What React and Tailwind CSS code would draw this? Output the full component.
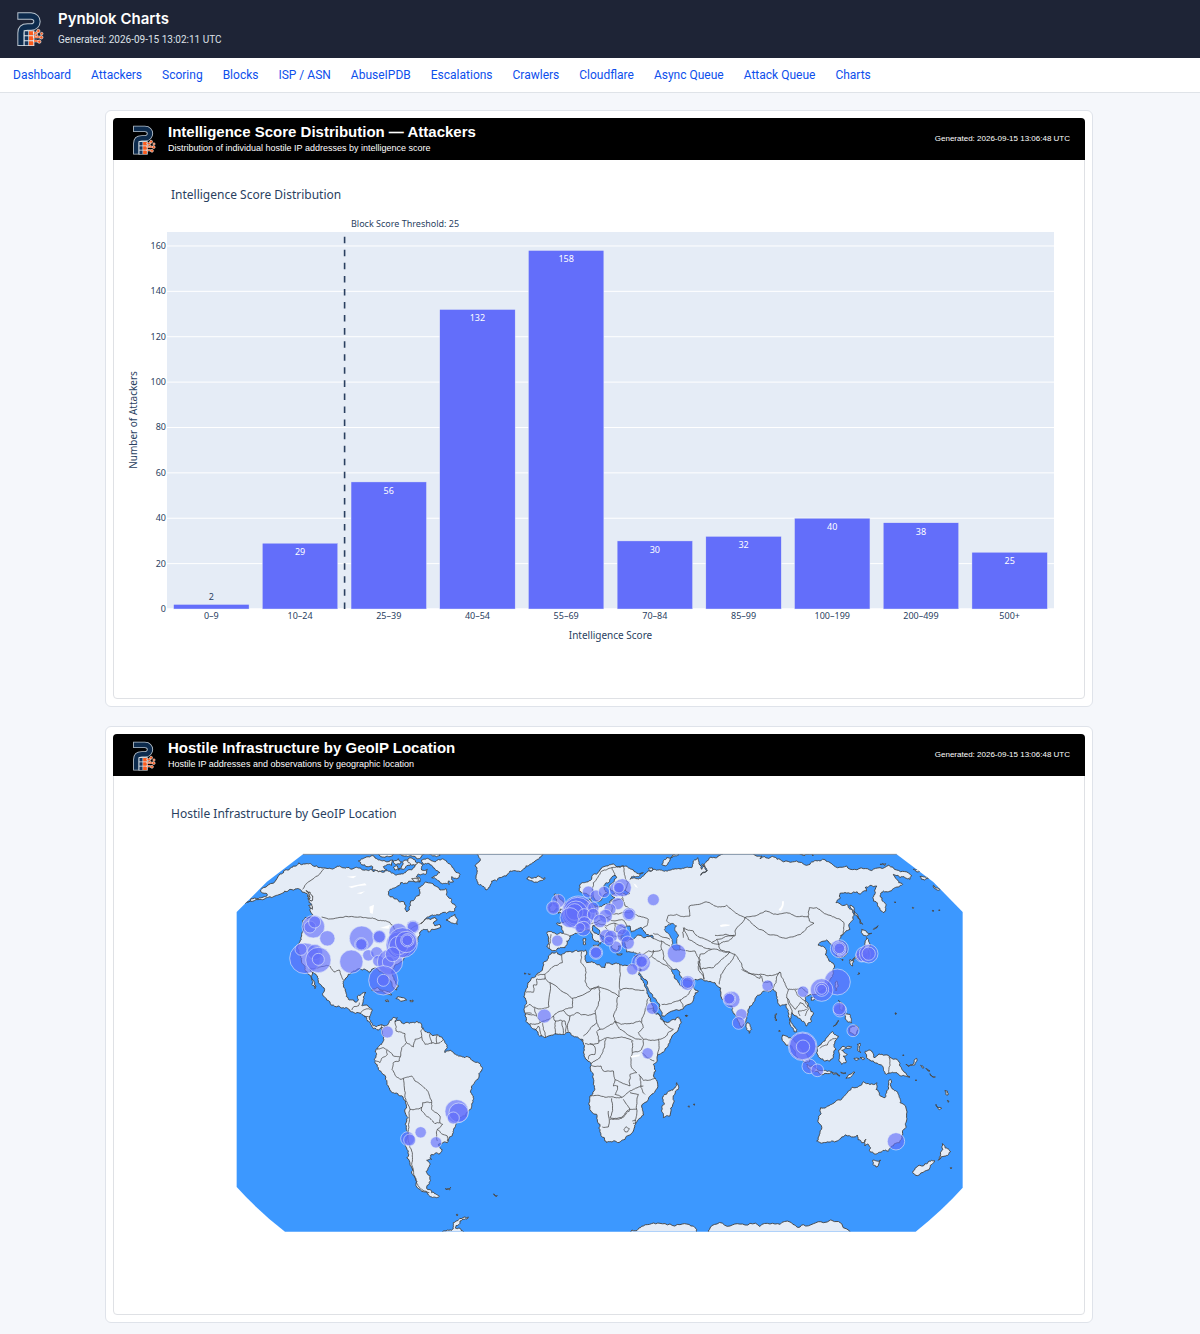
import React from "react";

const NAV_ITEMS = [
  "Dashboard",
  "Attackers",
  "Scoring",
  "Blocks",
  "ISP / ASN",
  "AbuseIPDB",
  "Escalations",
  "Crawlers",
  "Cloudflare",
  "Async Queue",
  "Attack Queue",
  "Charts",
];

const SCORES = [
  ["0–9", 2],
  ["10–24", 29],
  ["25–39", 56],
  ["40–54", 132],
  ["55–69", 158],
  ["70–84", 30],
  ["85–99", 32],
  ["100–199", 40],
  ["200–499", 38],
  ["500+", 25],
];

/* Map geometry: each region keeps its own origin; coordinates are relative to it. */
const REGIONS = [
  {
    at: [0, 0],
    land: [
      "150,84 165,72 190,60 225,54 250,60 285,66 310,68 335,64 350,64 362,69 390,66 410,72 430,78 450,76 470,74 490,82 510,84 530,76 545,72 555,60 570,50 578,58 575,72 592,70 585,86 565,84 558,92 570,98 570,108 545,106 530,112 512,110 500,122 480,130 475,145 480,152 502,160 522,168 528,178 525,190 530,198 538,192 542,178 542,165 555,158 568,148 570,138 566,125 578,118 586,108 605,112 620,122 630,132 648,128 652,150 665,170 678,182 674,195 650,202 620,206 600,210 585,220 573,232 590,218 615,214 622,222 610,232 615,240 630,236 632,244 615,250 595,258 592,250 580,250 570,258 565,272 560,290 540,300 545,312 530,325 520,340 500,355 490,368 485,378 492,395 505,420 500,432 490,425 478,400 468,385 450,378 440,368 425,370 420,378 400,370 380,372 355,385 345,400 340,420 348,440 355,460 375,468 385,460 385,448 400,440 408,440 402,458 395,478 415,482 425,490 420,510 425,530 440,542 455,536 470,545 470,552 455,545 445,552 430,548 412,525 400,508 385,500 370,498 350,485 325,480 290,462 280,450 283,435 265,405 250,380 240,368 245,395 258,420 255,428 245,415 235,385 225,365 215,345 205,320 208,290 215,270 218,235 225,215 240,215 248,205 240,190 245,175 235,160 225,140 205,128 180,130 150,145 120,152 90,160 45,172 85,158 112,146 92,136 100,125",
      "425,432 445,426 470,436 485,447 470,445 445,436",
      "498,458 505,452 520,455 530,462 512,466",
      "466,463 474,462 476,467 468,467",
      "540,463 549,462 549,467 541,467",
      "228,134 240,138 248,150 246,165 236,158",
      "236,178 244,176 247,190 240,186",
      "232,150 240,152 238,160",
      "1180,1170 1206,1152 1240,1140 1290,1132 1350,1136 1400,1150 1400,1170",
      "1425,1170 1440,1146 1500,1140 1560,1132 1620,1134 1680,1128 1720,1136 1780,1130 1860,1156 1860,1170",
    ],
    borders: [
      "218,130 240,105 282,68",
      "275,213 330,214 400,215 428,216 455,224 478,228 490,240 500,258 530,262 555,240 573,232",
      "240,366 262,366 290,358 300,360 312,378 328,372 340,402",
      "365,492 372,482 385,480 388,470",
      "390,502 400,492 424,490",
      "402,512 420,512",
      "455,546 454,536",
    ],
  },
  {
    at: [330, 0],
    land: [
      "55,45 75,35 110,38 135,45 158,42 155,58 130,62 140,70 115,78 95,70 98,62 65,56",
      "110,18 300,18 300,28 290,32 245,30 235,38 225,32 200,30 150,32 120,30",
      "160,45 175,38 185,48 170,55",
      "190,45 210,40 215,52 200,60 190,70 175,72 185,60",
      "205,38 225,42 232,52 215,58",
      "160,64 172,60 176,68 164,72",
      "245,42 265,38 285,48 300,42 320,45 335,60 345,75 360,85 350,98 335,92 340,108 325,105 328,115 305,112 290,100 275,95 290,88 300,80 285,70 275,58 250,55",
      "215,98 235,96 240,106 225,108",
      "318,222 330,215 345,205 348,215 353,220 352,235 340,232 330,228",
    ],
    borders: [],
  },
  {
    at: [510, 0],
    land: [
      "228,18 240,45 225,60 232,75 228,90 235,115 258,132 270,122 275,105 300,95 330,75 370,70 390,55 405,45 425,30 430,18",
      "380,98 385,92 400,96 415,90 435,95 428,103 408,108 392,104",
    ],
    borders: [],
  },
  {
    at: [390, 465],
    land: [
      "62,82 75,75 90,58 112,50 105,62 118,58 135,66 160,64 182,66 185,78 205,95 235,102 250,115 262,140 255,155 275,150 300,165 330,170 360,188 366,208 355,232 340,250 340,285 335,310 325,330 300,350 288,370 280,395 262,425 245,428 235,430 246,445 240,458 212,462 215,475 200,478 210,488 205,500 198,512 210,528 208,548 200,562 215,575 238,586 215,588 190,572 168,550 158,520 150,490 145,450 142,410 136,370 134,330 130,292 100,275 85,255 65,215 45,185 48,165 48,145 65,130 70,105",
      "240,705 258,690 275,688 280,665 300,652 325,648 300,660 285,680 310,692 320,705",
      "256,563 272,559 270,566 260,567",
      "400,579 412,584 408,587",
      "288,641 293,640 292,645",
    ],
    borders: [
      "105,62 108,90 135,98 140,125 125,140 122,165 118,180 100,185 96,205 105,222 120,235 130,232 155,225 165,240 195,262 210,290 215,305",
      "50,145 70,140 80,148 82,160 65,172 60,185 48,180",
      "80,145 100,165 120,168",
      "140,125 160,138 165,115 185,108 182,90 190,80",
      "185,108 195,130 215,126 240,125 250,115",
      "210,98 215,128",
      "232,102 230,126",
      "130,232 135,290 150,325 185,320 188,305 215,305 215,325 240,345 240,365 225,368 205,348 185,330 185,318",
      "240,365 248,370 232,385 230,400 232,420",
      "232,385 262,405 262,420",
      "150,325 148,360 145,400 155,450 155,490 165,530 180,560 208,575",
    ],
  },
  {
    at: [855, 345],
    land: [
      "110,-25 135,-18 155,-28 185,-32 212,-33 215,-20 210,-5 215,5 245,10 270,20 275,5 300,8 320,12 345,10 372,13 376,24 370,40 378,55 395,85 405,110 415,140 435,165 445,182 490,168 497,175 490,205 460,250 430,280 415,310 418,350 424,385 400,415 380,435 386,462 368,478 355,510 330,535 300,540 275,545 268,530 255,490 245,460 225,405 235,370 235,340 228,310 208,280 205,245 202,235 190,230 185,228 165,215 130,220 90,230 65,210 45,190 30,165 28,150 35,125 32,90 45,60 65,40 80,30 85,5 100,-15",
      "485,365 490,385 478,420 465,465 445,470 440,450 448,430 445,405 465,390",
      "200,238 204,236 203,241",
      "519,436 523,435 522,439",
      "535,430 539,429 538,433",
      "512,164 518,164 516,167",
      "28,36 33,37 30,40",
      "40,38 46,39 43,42",
    ],
    borders: [
      "140,-18 142,5 110,20 90,40 65,42",
      "32,94 55,94 55,72 65,72 65,54 90,54 90,40",
      "90,50 105,65 102,138 65,142 45,130 32,138",
      "105,65 170,112 195,105 252,75",
      "200,-28 198,5 212,25 210,60 225,85 252,78",
      "315,12 316,88 388,88",
      "252,78 312,108 312,88",
      "308,108 306,140 295,165 305,185 300,182",
      "252,80 250,130 240,150 245,185 225,205 205,225",
      "165,165 185,155 215,162 240,158",
      "172,112 172,140 145,148 165,165 160,212",
      "145,148 115,165 120,180 150,180",
      "60,140 65,165 75,185 88,180 115,165",
      "30,160 62,164",
      "30,156 50,157",
      "45,188 60,190 75,185",
      "85,182 85,205 92,228",
      "60,208 70,195 75,210 80,225",
      "122,180 122,220",
      "142,180 146,218",
      "150,180 153,216",
      "245,185 255,205 280,195 300,180 315,205 345,225 380,235",
      "255,205 245,212 252,240 250,247 210,248",
      "250,240 275,230 290,232 320,228 345,235 355,240",
      "273,232 265,265 255,290 240,300 228,308",
      "225,248 240,258 240,280 222,284 220,295",
      "305,185 320,190 345,188 375,180 385,200 370,215 385,235",
      "400,112 395,130 390,150 380,185",
      "395,145 415,140 428,158 442,175 450,190 475,205 450,228 430,235 405,238 385,235",
      "430,235 428,285",
      "385,235 380,265 352,275 350,240",
      "380,275 418,300",
      "352,275 348,300 350,320 365,335 345,340 345,375 325,368 310,360 300,355 295,330 265,330 258,315 230,313",
      "422,352 400,358 385,358 372,340",
      "300,355 295,375 308,375 300,400 320,410 355,385 385,375",
      "375,345 378,380 390,400",
      "228,405 260,406 300,410 320,408",
      "290,412 285,470 318,470 345,445 325,415",
      "345,445 365,445 370,400 345,395",
      "365,445 362,480",
      "262,498 280,498 280,450",
      "285,475 320,472 345,448",
      "327,505 333,497 343,503 337,513 330,512 327,505",
      "352,480 360,477 362,486 354,487",
    ],
  },
  {
    at: [855, 0],
    land: [
      "95,262 115,260 145,262 140,240 125,232 150,225 165,222 165,210 185,205 200,195 210,185 215,165 225,160 235,150 230,168 240,180 262,180 285,175 290,160 300,155 290,148 320,143 345,142 330,132 300,140 285,130 285,115 305,95 300,88 285,100 270,115 268,130 278,140 265,150 255,165 245,165 235,145 222,148 200,140 193,120 215,108 235,85 260,65 290,55 325,60 350,70 385,80 370,92 350,92 345,100 365,98 385,90 410,75 430,72 455,75 480,68 510,65 530,65 535,45 548,35 560,70 567,55 575,75 562,80 557,88 577,72 560,55 575,45 605,35 625,22 715,22 740,30 735,38 765,35 795,40 845,45 885,55 915,45 945,50 995,60 1045,68 1095,65 1145,72 1190,90 1185,100 1155,95 1135,85 1145,100 1163,115 1135,128 1105,135 1095,150 1113,175 1107,200 1095,190 1075,165 1080,145 1085,120 1065,118 1050,125 1055,135 1015,138 975,142 963,170 995,175 1010,190 1015,220 1005,250 980,268 975,288 993,300 995,325 965,330 957,310 950,295 935,282 910,298 930,305 935,315 930,325 950,350 955,380 945,400 930,430 905,445 885,445 870,450 880,475 895,500 890,525 873,540 860,525 845,510 830,500 828,512 835,540 845,557 837,557 825,535 820,500 815,475 795,480 785,450 775,430 757,435 740,440 720,460 700,490 693,525 680,545 660,505 650,480 635,470 617,450 600,410 570,405 540,400 525,405 500,395 480,370 470,368 478,390 490,410 510,425 530,415 535,425 550,435 530,470 500,490 440,510 435,490 415,455 400,430 380,390 372,383 378,370 378,340 380,330 375,320 355,318 335,318 330,300 330,285 350,280 365,270 390,275 415,278 412,268 385,252 375,245 365,250 350,258 345,240 330,242 325,260 318,275 322,290 318,300 310,300 305,315 290,305 285,285 265,270 250,250 235,238 232,244 255,270 268,285 255,295 250,285 228,260 215,250 195,255 180,262 165,270 155,285 150,305 125,312 108,312 95,300 100,285",
      "235,298 252,296 248,305",
      "205,278 212,278 212,295 205,295",
      "145,204 130,202 140,190 125,178 120,155 118,145 132,145 135,160 150,175 165,195 160,202",
      "102,185 110,170 125,170 125,190 105,198",
      "440,55 455,35 480,22 492,26 465,42 455,58",
      "305,323 322,324 318,327",
      "358,330 368,326 364,333",
      "400,68 412,66 414,72 404,74",
      "852,22 890,22 894,30 870,28",
      "1095,55 1112,53 1110,58",
      "1195,70 1215,76 1206,78",
      "1215,92 1240,98 1228,102",
      "1255,118 1275,130 1265,132",
    ],
    borders: [
      "325,60 328,85 340,110 330,135",
      "235,145 235,110 260,75 290,65 325,60",
      "290,65 300,90",
      "288,165 320,158 330,180 350,195",
      "320,145 325,165",
      "240,180 245,205 275,215 290,205 290,178",
      "290,205 330,200 350,195 360,205 400,220 395,240 380,250",
      "200,195 210,215 205,235 212,250",
      "210,235 245,230 260,220",
      "232,240 250,232 275,240 300,232 320,240 330,250",
      "275,215 300,225 325,222 335,242",
      "300,232 300,255 320,262",
      "270,242 285,270 305,272 325,268",
      "285,285 295,275",
      "108,265 106,290 104,308",
      "145,262 165,270",
      "415,278 440,285 440,310 400,315 380,330",
      "415,262 440,272 465,280",
      "415,312 410,330 385,350",
      "440,310 445,340 470,365",
      "410,332 440,352 468,370",
      "440,285 465,300",
      "372,350 378,375",
      "440,475 470,472 500,460 530,430",
      "495,460 505,485",
      "495,310 540,315 555,340 550,370 567,400",
      "472,236 455,225 460,208 485,205 505,212 525,210 523,180 570,168 600,180 635,178 655,195 690,215 660,255 660,270 605,280 590,290 555,275 535,255 507,245 505,275",
      "505,245 520,280 560,300 590,310",
      "690,215 720,210 750,195 785,205 815,200 845,212 880,212 883,225 897,232 875,245 857,265 820,275 785,268 750,258 720,240 690,215",
      "880,212 883,185 905,185 945,208 975,220 987,230 985,262 975,270",
      "605,280 615,310 660,325 670,340 685,370 720,385 765,388 795,378 805,400 820,430 845,430 860,425 880,440",
      "660,325 645,350 625,375 615,400 613,415",
      "555,325 590,310 620,315 645,318",
      "555,325 555,370 595,365 620,340 645,318",
      "550,345 567,400",
      "600,268 630,265 658,268",
      "590,290 612,295 640,285 655,270",
      "680,370 700,382 735,397 737,387",
      "740,390 745,410 768,408 775,430",
      "795,378 785,392 775,425",
      "820,430 815,455 840,490 855,470 875,485",
      "840,432 850,450 870,465 880,490 870,510",
      "815,455 825,480 832,505",
      "855,510 850,495 875,490",
      "965,305 985,300",
    ],
  },
  {
    at: [1350, 0],
    land: [
      "202,530 215,550 208,562 200,550",
      "470,405 475,420 468,435 465,420",
      "393,455 403,453 402,462 394,463",
      "510,178 520,182 540,220 548,235 540,232 525,205",
      "545,250 560,258 575,262 560,270 550,268",
      "560,275 568,290 565,320 545,332 520,338 515,345 535,325 552,310 555,285",
      "510,340 522,345 518,360 510,352",
      "528,336 540,334 536,342",
      "580,250 594,239 590,246",
      "485,341 489,340 488,344",
      "536,380 540,383 534,386",
      "643,168 647,168 646,171",
      "697,184 701,185 699,188",
      "757,193 762,194 758,196",
      "776,192 780,192 778,195",
      "645,501 649,502 647,505",
      "286,505 290,503 289,525 286,520",
      "15,508 21,508 19,512",
    ],
    borders: [],
  },
  {
    at: [1620, 345],
    land: [
      "38,222 55,230 90,260 120,300 105,305 75,270",
      "140,258 165,240 188,212 205,225 195,240 198,265 180,300 150,292 140,275",
      "110,310 135,320 160,328 185,332 178,338 130,330",
      "185,334 200,336 210,345 190,340",
      "205,270 215,258 245,258 215,268 232,280 220,285 228,305 215,310 208,290",
      "228,352 240,340 255,334 244,346",
      "212,334 228,336 220,338",
      "285,272 305,270 312,290 345,282 385,300 400,330 420,348 395,345 370,335 350,340 340,320 310,300 290,285",
      "205,118 215,125 218,150 208,145",
      "222,158 240,160 245,185 232,182",
      "240,200 258,192 265,205 255,225 240,215",
      "190,196 205,178 200,190",
      "262,250 270,246 268,262 272,275 264,270",
      "252,292 268,294 262,297",
      "270,289 284,293 278,296",
      "408,310 430,308 440,292 434,312 415,316",
      "452,313 462,320 456,320",
      "468,322 480,330 474,330",
      "480,338 496,348 486,346",
      "525,388 532,390 534,402 527,400",
      "498,430 515,442 508,446",
      "532,418 537,420 535,424",
      "150,545 140,540 150,515 145,475 152,440 185,430 215,415 235,390 255,380 275,372 280,362 320,365 318,385 345,410 355,385 362,355 370,385 385,400 390,425 410,465 408,495 395,525 370,555 355,570 325,575 300,572 295,550 285,555 288,535 275,545 262,522 215,528 185,540",
      "308,598 320,600 332,598 318,618",
      "517,548 525,560 542,572 525,585 505,598 512,580",
      "495,600 480,620 435,642 428,635 460,615 485,598",
      "398,282 402,282 400,285",
      "436,357 440,357 438,360",
      "376,156 379,157 377,160",
      "541,620 545,620 543,624",
      "27,208 31,210 28,213",
    ],
    borders: ["357,288 357,338", "150,262 172,252 180,238 198,232"],
  },
];

const LAKES = [
  "M350,92 l30,-3 -10,8z M355,122 l50,-10 5,6 -25,2 -20,6z M380,142 l25,-6 -12,8z M418,182 l14,-6 -4,28 -8,-4z M450,246 l30,-10 -4,12z",
  "M1646,190 q12,-8 10,-24 l6,0 q0,22 -12,30z M1470,238 q10,-6 30,-2 l-2,3 -26,4z",
  "M1210,112 l8,4 6,10 -8,-4z M1202,630 l28,-5 -2,6 -24,4z",
];

const CASPIAN =
  "1305,242 1325,232 1340,240 1335,255 1347,268 1340,278 1350,300 1350,312 1335,312 1325,300 1320,270";

const BUBBLES = [
  [250, 242, 34], [240, 243, 18], [254, 228, 18], [292, 277, 23], [225, 337, 46], [213, 310, 18],
  [255, 318, 23], [265, 342, 38], [265, 340, 18], [364, 347, 35], [395, 277, 37], [394, 295, 20],
  [394, 295, 17], [448, 272, 20], [448, 272, 18], [415, 328, 17], [440, 320, 18], [445, 345, 17],
  [505, 260, 28], [549, 243, 20], [549, 243, 17], [480, 348, 38], [475, 348, 18], [460, 403, 44],
  [460, 403, 18], [508, 297, 40], [518, 290, 45], [506, 298, 28], [528, 288, 32], [532, 283, 20],
  [532, 283, 16], [488, 325, 22], [472, 558, 18],
  [985, 165, 20], [970, 185, 17], [970, 185, 20], [1045, 200, 50], [1043, 198, 44], [1038, 200, 35],
  [1034, 198, 25], [1020, 215, 30], [1063, 208, 20], [1063, 232, 20], [1060, 248, 22], [1050, 245, 15],
  [1090, 185, 17], [1090, 205, 18], [1075, 138, 18], [1098, 150, 18], [1122, 138, 17], [1160, 130, 22],
  [1177, 125, 27], [1167, 125, 16], [1163, 173, 18], [1140, 190, 18], [1127, 210, 20], [1110, 225, 20],
  [1197, 205, 20], [1197, 205, 16], [1270, 161, 18], [982, 284, 17], [1098, 320, 20], [1098, 320, 17],
  [1130, 272, 22], [1143, 272, 19], [1173, 250, 17], [1181, 268, 20], [1193, 290, 20], [1157, 303, 18],
  [1137, 285, 15], [1340, 322, 28], [1233, 350, 28], [1235, 347, 20], [1235, 347, 17], [1207, 370, 17],
  [1373, 411, 22], [1373, 410, 17], [1267, 487, 18], [943, 510, 21], [1253, 622, 17],
  [1828, 308, 27], [1828, 307, 20], [1828, 307, 16], [1895, 330, 18], [1900, 325, 22], [1916, 323, 28],
  [1916, 323, 20], [1822, 408, 39], [1775, 432, 34], [1775, 430, 21], [1775, 430, 15], [1719, 437, 17],
  [1613, 419, 17], [1505, 461, 25], [1498, 458, 19], [1498, 458, 16], [1534, 505, 17], [1526, 531, 19],
  [1830, 493, 20], [1828, 488, 19], [1869, 554, 18],
  [1718, 601, 43], [1718, 601, 40], [1719, 602, 20], [1738, 661, 22], [1762, 673, 19], [1998, 886, 26],
  [680, 796, 35], [686, 800, 29], [670, 816, 18], [572, 859, 17], [533, 878, 21], [539, 882, 18],
  [618, 889, 17],
];

/* Adds small natural-looking irregularities along a coarse line. */
function roughen(points, closed) {
  let pts = points.split(" ").map((p) => p.split(",").map(Number));
  for (let pass = 0; pass < 3; pass++) {
    const next = [];
    const count = closed ? pts.length : pts.length - 1;
    for (let i = 0; i < count; i++) {
      const a = pts[i];
      const b = pts[(i + 1) % pts.length];
      next.push(a);
      const dx = b[0] - a[0];
      const dy = b[1] - a[1];
      const len = Math.hypot(dx, dy);
      if (len > 5 && len < 110) {
        const n = Math.sin(a[0] * 12.9898 + a[1] * 78.233 + pass) * 43758.5453;
        const k = (n - Math.floor(n) - 0.5) * (closed ? 0.45 : 0.22);
        next.push([(a[0] + b[0]) / 2 - dy * k, (a[1] + b[1]) / 2 + dx * k]);
      }
    }
    if (!closed) next.push(pts[pts.length - 1]);
    pts = next;
  }
  const d = pts.map((p) => `${p[0].toFixed(1)},${p[1].toFixed(1)}`).join("L");
  return `M${d}${closed ? "Z" : ""}`;
}

function Logo({ className }) {
  const letter = "M15 15H45C69 15 69 48 45 48H35Q15 48 15 66V94";
  return (
    <svg viewBox="0 0 84 108" className={className} aria-hidden="true">
      <g fill="none" strokeLinejoin="round">
        <path d={letter} stroke="#b9c4cf" strokeWidth="22" strokeLinecap="square" />
        <path d={letter} stroke="#0d2b4d" strokeWidth="16" strokeLinecap="square" />
      </g>
      <path d="M23 58H55V105H23Z" fill="#e3e8ec" />
      <path d="M26 61h11v12H26zM26 76h11v12H26zM26 91h11v12H26z" fill="#16365c" />
      <path d="M39 61h13v12H39zM39 76h13v12H39zM39 91h13v12H39z" fill="#fb5a1c" />
      <g stroke="#e6ebef" strokeWidth="7" strokeLinecap="round" fill="none">
        <path d="M54 66h8l5-6M54 78h22M54 90h8l8 2" />
      </g>
      <g stroke="#fb5a1c" strokeWidth="4" fill="none">
        <path d="M54 66h8l5-6M54 78h22M54 90h8l8 2" />
      </g>
      <g fill="#fb5a1c" stroke="#e6ebef" strokeWidth="2">
        <circle cx="67" cy="60" r="5" />
        <circle cx="77" cy="68" r="4" />
        <circle cx="76" cy="79" r="5" />
        <circle cx="70" cy="92" r="5" />
        <circle cx="61" cy="73" r="4" />
      </g>
    </svg>
  );
}

function ScoreChart() {
  const step = 88.7;
  const y = (v) => 609 - v * 2.269;
  return (
    <svg
      viewBox="114 160 970 538"
      className="block h-auto w-full font-['Noto_Sans',sans-serif]"
      role="img"
      aria-label="Intelligence Score Distribution"
      fill="#2a3f5f"
    >
      <text x="171" y="199" fontSize="12">Intelligence Score Distribution</text>
      <rect x="167" y="232" width="887" height="377" fill="#e5ecf6" />
      {[0, 20, 40, 60, 80, 100, 120, 140, 160].map((v) => (
        <g key={v}>
          <path d={`M167 ${y(v)}H1054`} stroke="#fff" strokeWidth={v === 0 ? 1.5 : 1} />
          <text x="166" y={y(v) + 3} fontSize="9" textAnchor="end">{v}</text>
        </g>
      ))}
      {SCORES.map(([label, v], i) => {
        const cx = 167 + step * (i + 0.5);
        return (
          <g key={label} fontSize="9" textAnchor="middle">
            <rect x={cx - 37.7} y={y(v)} width="75.4" height={609 - y(v)} fill="#636efa" stroke="#e5ecf6" strokeWidth="0.4" />
            <text x={cx} y={v < 5 ? y(v) - 4 : y(v) + 12} fill={v < 5 ? "#2a3f5f" : "#fff"}>{v}</text>
            <text x={cx} y="619">{label}</text>
          </g>
        );
      })}
      <path d="M344.6 236.7V609" stroke="#2a3f5f" strokeWidth="1.6" strokeDasharray="6.53 6.53" />
      <text x="351" y="227" fontSize="9">Block Score Threshold: 25</text>
      <text x="610.5" y="639" fontSize="10" textAnchor="middle">Intelligence Score</text>
      <text transform="translate(137 420) rotate(-90)" fontSize="10" textAnchor="middle">Number of Attackers</text>
    </svg>
  );
}

function GeoMap() {
  const sphere = "M219 25H2000L2110 108L2198 198V1025Q2140 1090 2057 1157H165Q90 1100 20 1023V198L110 108Z";
  return (
    <svg
      viewBox="114 775 970 538"
      className="block h-auto w-full font-['Noto_Sans',sans-serif]"
      role="img"
      aria-label="Hostile Infrastructure by GeoIP Location"
    >
      <text x="171" y="817" fontSize="12" fill="#2a3f5f">Hostile Infrastructure by GeoIP Location</text>
      <clipPath id="sphere">
        <path d={sphere} />
      </clipPath>
      <g transform="translate(230 845) scale(0.33333)">
        <path d={sphere} fill="#3c98ff" />
        <g clipPath="url(#sphere)">
          {REGIONS.map((r) => (
            <g key={r.at.join()} transform={`translate(${r.at[0]} ${r.at[1]})`} stroke="#444" strokeWidth="2.8" strokeLinejoin="round">
              {r.land.map((p) => (
                <path key={p} d={roughen(p, true)} fill="#e5ecf6" />
              ))}
              {r.borders.map((p) => (
                <path key={p} d={roughen(p, false)} fill="none" strokeWidth="2.3" />
              ))}
            </g>
          ))}
          <path d={roughen(CASPIAN, true)} fill="#3c98ff" stroke="#444" strokeWidth="2.3" />
          {LAKES.map((d) => (
            <path key={d} d={d} fill="#fff" />
          ))}
        </g>
        <path d="M219 25H2000" stroke="#777" strokeWidth="2" />
        <g fill="#636efa" fillOpacity="0.65" stroke="#e5ecf6" strokeOpacity="0.7" strokeWidth="2.6">
          {BUBBLES.map(([x, y, r], i) => (
            <circle key={i} cx={x} cy={y} r={r} />
          ))}
        </g>
      </g>
    </svg>
  );
}

function ChartCard({ title, subtitle, children }) {
  return (
    <section className="rounded-md border border-[#dfe3ea] bg-white p-[7px]">
      <div className="rounded border border-[#dfe1e5]">
        <header className="-mx-px -mt-px flex h-[42px] items-center rounded-t bg-black pr-[15px] pl-[19px] font-['Liberation_Sans',sans-serif] text-white">
          <Logo className="mt-0.5 h-8 w-6 shrink-0" />
          <div className="ml-3 flex-1">
            <h2 className="text-[15px] leading-[18px] font-bold">{title}</h2>
            <p className="text-[9px] leading-[14px]">{subtitle}</p>
          </div>
          <p className="text-[8px] leading-3">Generated: 2026-09-15 13:06:48 UTC</p>
        </header>
        {children}
      </div>
    </section>
  );
}

export default function App() {
  return (
    <div className="min-h-screen bg-[#f5f7fb] font-['Inter',sans-serif]">
      <header className="flex h-[58px] items-center bg-[#1e2436] pl-4 text-white">
        <Logo className="h-9 w-7" />
        <div className="ml-3.5">
          <h1 className="text-[15px] leading-[22px] font-semibold">Pynblok Charts</h1>
          <p className="font-['Roboto',sans-serif] text-[10px] leading-5 text-[#dde1e8]">
            Generated: 2026-09-15 13:02:11 UTC
          </p>
        </div>
      </header>
      <nav className="flex h-[35px] items-center gap-5 border-b border-[#dfe3e8] bg-white pl-[13px] font-['Roboto',sans-serif] text-xs text-[#0d4fec]">
        {NAV_ITEMS.map((item) => (
          <a key={item} href="#" className="whitespace-nowrap">
            {item}
          </a>
        ))}
      </nav>
      <main className="pt-[17px] pr-0.5 pb-[13px]">
        <div className="mx-auto flex max-w-[988px] flex-col gap-[19px]">
          <ChartCard
            title="Intelligence Score Distribution — Attackers"
            subtitle="Distribution of individual hostile IP addresses by intelligence score"
          >
            <ScoreChart />
          </ChartCard>
          <ChartCard
            title="Hostile Infrastructure by GeoIP Location"
            subtitle="Hostile IP addresses and observations by geographic location"
          >
            <GeoMap />
          </ChartCard>
        </div>
      </main>
    </div>
  );
}
